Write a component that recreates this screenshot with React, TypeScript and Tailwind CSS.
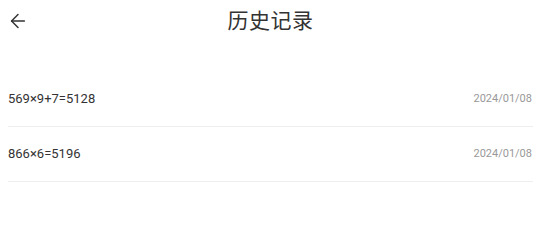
import { ArrowLeft } from "lucide-react";

const records = [
  { expr: "569×9+7=5128", date: "2024/01/08" },
  { expr: "866×6=5196", date: "2024/01/08" },
];

export default function App() {
  return (
    <div className="min-h-screen bg-white font-['Roboto','Noto_Sans_CJK_SC',sans-serif] text-[#333]">
      <header className="relative flex h-[42px] items-center justify-center">
        <button className="absolute left-[6px] top-[9px] flex h-6 w-6 items-center justify-center text-[#333]">
          <ArrowLeft className="h-[22px] w-[22px]" strokeWidth={1.6} />
        </button>
        <h1 className="text-[21px] leading-none tracking-[0.5px]">历史记录</h1>
      </header>

      <ul className="mt-[30px] px-[8px]">
        {records.map((r, i) => (
          <li
            key={i}
            className="flex h-[55px] items-center justify-between border-b border-[#eeeeee] pr-[1px]"
          >
            <span className="text-[13px]">{r.expr}</span>
            <span className="text-[11px] text-[#999]">{r.date}</span>
          </li>
        ))}
      </ul>
    </div>
  );
}
